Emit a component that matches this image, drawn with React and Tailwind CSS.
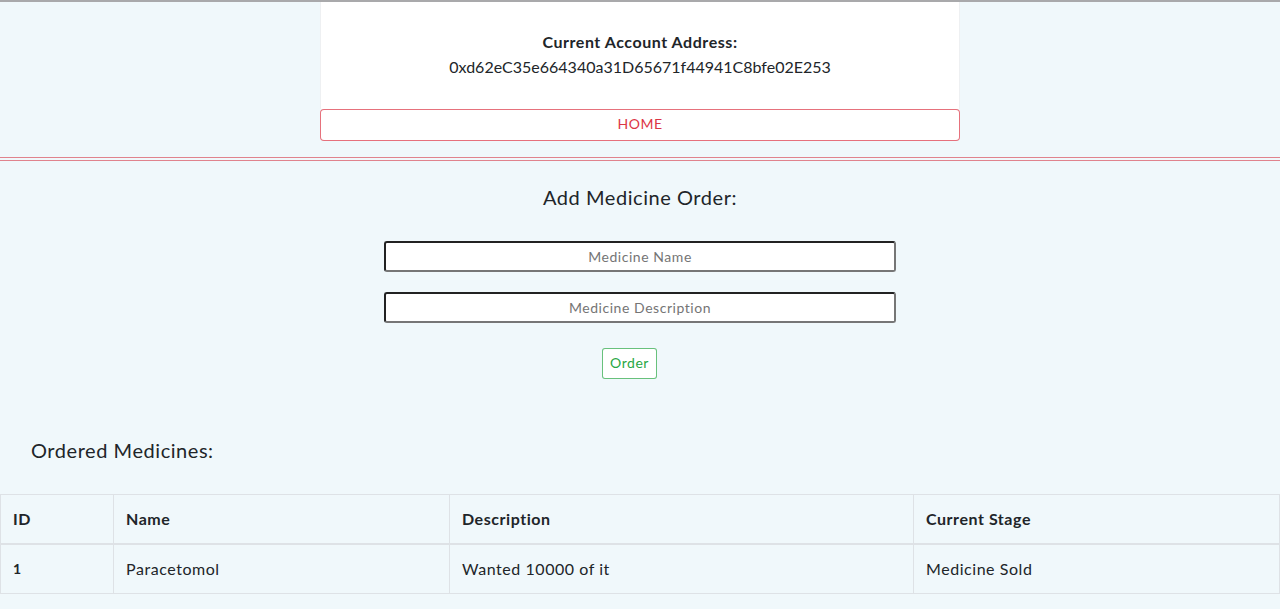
import React from "react";

const orders = [{ id: 1, name: "Paracetomol", description: "Wanted 10000 of it", stage: "Medicine Sold" }];

export default function App() {
  return (
    <div className="min-h-[609px] w-full bg-[#f0f8fb] text-[#212529] font-['Lato','Open_Sans',sans-serif] tracking-[0.55px] border-t-2 border-[#a9a9ab]">
      <div className="w-[640px] mx-auto">
        <div className="bg-white border-x border-[#eef0f2] h-[107px] flex flex-col items-center pt-[30px]">
          <div className="font-bold text-[16px] leading-[20px]">Current Account Address:</div>
          <div className="text-[16px] leading-[20px] mt-[5px] tracking-normal">0xd62eC35e664340a31D65671f44941C8bfe02E253</div>
        </div>
        <button className="w-full h-[32px] pb-[3px] bg-white border border-[#dc3545]/70 rounded-[4px] text-[#dc3545] text-[14px]">
          HOME
        </button>
      </div>

      <div className="mt-[16px] h-[4px] border-y border-[#e0838d]"></div>

      <div className="flex flex-col items-center">
        <h2 className="text-[20px] mt-[23px] leading-[26px]">Add Medicine Order:</h2>
        <input
          className="mt-[31px] w-[512px] h-[31px] bg-white border-2 border-[#222] border-b-[#767676] border-r-[#767676] rounded-[3px] text-center text-[14px] placeholder:text-[#757575] outline-none"
          placeholder="Medicine Name"
        />
        <input
          className="mt-[20px] w-[512px] h-[31px] bg-white border-2 border-[#222] border-b-[#767676] border-r-[#767676] rounded-[3px] text-center text-[14px] placeholder:text-[#757575] outline-none"
          placeholder="Medicine Description"
        />
        <button className="mt-[25px] mr-[21px] w-[55px] h-[31px] pb-[2px] bg-white border border-[#28a745]/70 rounded-[3px] text-[#28a745] text-[14px]">
          Order
        </button>
      </div>

      <h3 className="text-[20px] leading-[26px] mt-[58px] ml-[31px]">Ordered Medicines:</h3>

      <table className="mt-[31px] w-full border-collapse text-[16px]">
        <thead>
          <tr className="h-[49px]">
            <th className="w-[113px] text-left font-bold px-[12px] border border-[#dee2e6] border-b-2">ID</th>
            <th className="w-[336px] text-left font-bold px-[12px] border border-[#dee2e6] border-b-2">Name</th>
            <th className="w-[464px] text-left font-bold px-[12px] border border-[#dee2e6] border-b-2">Description</th>
            <th className="text-left font-bold px-[12px] border border-[#dee2e6] border-b-2">Current Stage</th>
          </tr>
        </thead>
        <tbody>
          {orders.map((o) => (
            <tr key={o.id} className="h-[50px]">
              <td className="px-[12px] border border-[#dee2e6] font-bold text-[14px]">{o.id}</td>
              <td className="px-[12px] border border-[#dee2e6]">{o.name}</td>
              <td className="px-[12px] border border-[#dee2e6]">{o.description}</td>
              <td className="px-[12px] border border-[#dee2e6]">{o.stage}</td>
            </tr>
          ))}
        </tbody>
      </table>
    </div>
  );
}
